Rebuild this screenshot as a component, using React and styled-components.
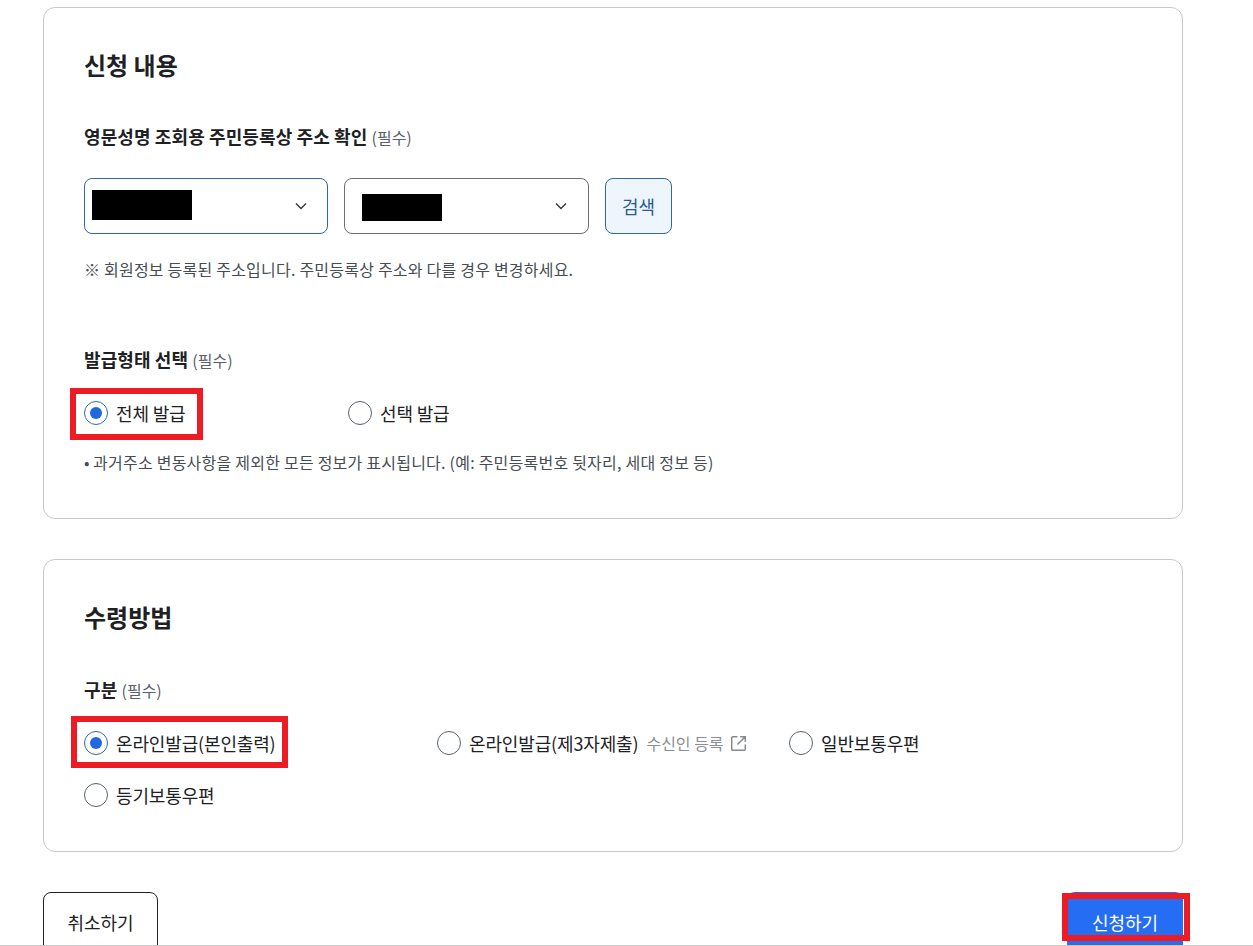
import React from "react";
import styled, { createGlobalStyle } from "styled-components";

const GlobalStyle = createGlobalStyle`
  html, body {
    margin: 0;
    padding: 0;
    background: #fff;
    overflow: hidden;
  }
  body {
    font-family: "Noto Sans CJK KR", "Noto Sans", sans-serif;
    color: #1e2124;
  }
`;

const App = () => {
  return (
    <Page>
      <GlobalStyle />
      <Card $height={512}>
        <CardTitle>신청 내용</CardTitle>
        <FieldLabel $top={41}>
          영문성명 조회용 주민등록상 주소 확인 <Required>(필수)</Required>
        </FieldLabel>
        <SelectRow>
          <Select $active $width={244}>
            <Redacted $width={100} $height={30} $left={-12} $shift={-2} />
            <Chevron />
          </Select>
          <Select $width={245}>
            <Redacted $width={80} $height={27} $left={-2} $shift={3} />
            <Chevron />
          </Select>
          <SearchButton>검색</SearchButton>
        </SelectRow>
        <Note>※ 회원정보 등록된 주소입니다. 주민등록상 주소와 다를 경우 변경하세요.</Note>
        <FieldLabel $top={66}>
          발급형태 선택 <Required>(필수)</Required>
        </FieldLabel>
        <RadioRow $top={29} $gap={161}>
          <Radio $checked $width={103}>
            <Circle $checked />
            <span>전체 발급</span>
            <Highlight $top={-13} $left={-14} $width={133} $height={52} />
          </Radio>
          <Radio>
            <Circle />
            <span>선택 발급</span>
          </Radio>
        </RadioRow>
        <Hint>•&#8201;과거주소 변동사항을 제외한 모든 정보가 표시됩니다. (예: 주민등록번호 뒷자리, 세대 정보 등)</Hint>
      </Card>

      <Card $height={293}>
        <CardTitle>수령방법</CardTitle>
        <FieldLabel $top={42}>
          구분 <Required>(필수)</Required>
        </FieldLabel>
        <RadioRow $top={29} $gap={0}>
          <Radio $checked $width={353}>
            <Circle $checked />
            <span>온라인발급(본인출력)</span>
            <Highlight $top={-15} $left={-13} $width={217} $height={52} />
          </Radio>
          <Radio $width={352}>
            <Circle />
            <span>온라인발급(제3자제출)</span>
            <SubLink>
              수신인 등록
              <ExternalIcon />
            </SubLink>
          </Radio>
          <Radio>
            <Circle />
            <span>일반보통우편</span>
          </Radio>
        </RadioRow>
        <RadioRow $top={28} $gap={0}>
          <Radio>
            <Circle />
            <span>등기보통우편</span>
          </Radio>
        </RadioRow>
      </Card>

      <Actions>
        <CancelButton>취소하기</CancelButton>
        <SubmitButton>
          신청하기
          <Highlight $top={1} $left={-5} $width={128} $height={48} />
        </SubmitButton>
      </Actions>
    </Page>
  );
};

export default App;

const Chevron = () => (
  <ChevronSvg viewBox="0 0 14 14" fill="none">
    <path d="M2 4.5 L7 9.5 L12 4.5" stroke="#33363d" strokeWidth="1.4" />
  </ChevronSvg>
);

const ExternalIcon = () => (
  <LinkSvg viewBox="0 0 16 16" fill="none">
    <path
      d="M7 1.6 H2.6 A1 1 0 0 0 1.6 2.6 V13.4 A1 1 0 0 0 2.6 14.4 H13.4 A1 1 0 0 0 14.4 13.4 V9 M9.6 1.6 H14.4 V6.4 M14.4 1.6 L7 9"
      stroke="#85888c"
      strokeWidth="1.4"
    />
  </LinkSvg>
);

const Page = styled.div`
  box-sizing: border-box;
  position: relative;
  width: 1253px;
  height: 946px;
  padding: 7px 70px 0 43px;
  overflow: hidden;
  border-bottom: 1px solid #c9c9c9;
`;

const Card = styled.section`
  box-sizing: border-box;
  width: 1140px;
  height: ${(p) => p.$height}px;
  margin-bottom: 40px;
  padding: 39px 40px 0;
  border: 1px solid #c6c8cc;
  border-radius: 12px;
  background: #fff;
`;

const CardTitle = styled.h2`
  margin: 0;
  font-size: 24px;
  line-height: 36px;
  font-weight: 700;
  color: #1e2124;
`;

const FieldLabel = styled.div`
  margin-top: ${(p) => p.$top}px;
  font-size: 18px;
  line-height: 24px;
  font-weight: 700;
  letter-spacing: 0.1px;
  color: #1e2124;
`;

const Required = styled.span`
  font-size: 16px;
  font-weight: 400;
  letter-spacing: 0;
  color: #58616a;
`;

const SelectRow = styled.div`
  display: flex;
  gap: 16px;
  margin-top: 29px;
`;

const Select = styled.div`
  box-sizing: border-box;
  display: flex;
  align-items: center;
  justify-content: space-between;
  width: ${(p) => p.$width}px;
  height: 56px;
  padding: 0 ${(p) => (p.$active ? 19 : 20)}px 0 19px;
  border: 1px solid ${(p) => (p.$active ? "#2c6aa0" : "#6b6e72")};
  border-radius: 8px;
  background: #fff;
`;

const Redacted = styled.div`
  width: ${(p) => p.$width}px;
  height: ${(p) => p.$height}px;
  margin-left: ${(p) => p.$left}px;
  margin-top: ${(p) => p.$shift}px;
  background: #000;
`;

const ChevronSvg = styled.svg`
  width: 14px;
  height: 14px;
  flex: none;
`;

const SearchButton = styled.button`
  box-sizing: border-box;
  width: 67px;
  height: 56px;
  padding: 0;
  border: 1px solid #2c6aa0;
  border-radius: 8px;
  background: #eef5fd;
  color: #2a5a96;
  font-family: inherit;
  font-size: 18px;
`;

const Note = styled.p`
  margin: 23px 0 0;
  font-size: 16px;
  line-height: 24px;
  letter-spacing: 0.22px;
  color: #464c53;
`;

const RadioRow = styled.div`
  display: flex;
  align-items: center;
  gap: ${(p) => p.$gap}px;
  margin-top: ${(p) => p.$top}px;
`;

const Radio = styled.label`
  position: relative;
  display: flex;
  align-items: center;
  gap: 8px;
  width: ${(p) => (p.$width ? `${p.$width}px` : "auto")};
  height: 24px;
  font-size: 18px;
  letter-spacing: -0.15px;
  color: #1e2124;
`;

const Circle = styled.span`
  box-sizing: border-box;
  display: flex;
  align-items: center;
  justify-content: center;
  width: 24px;
  height: 24px;
  flex: none;
  border: 1px solid ${(p) => (p.$checked ? "#2c6aa8" : "#58616a")};
  border-radius: 50%;
  background: #fff;

  &::after {
    content: "";
    display: ${(p) => (p.$checked ? "block" : "none")};
    width: 12px;
    height: 12px;
    border-radius: 50%;
    background: #1f68e0;
  }
`;

const Highlight = styled.span`
  box-sizing: border-box;
  position: absolute;
  top: ${(p) => p.$top}px;
  left: ${(p) => p.$left}px;
  width: ${(p) => p.$width}px;
  height: ${(p) => p.$height}px;
  border: 6px solid #ed1c24;
  pointer-events: none;
`;

const SubLink = styled.span`
  display: inline-flex;
  align-items: center;
  gap: 6px;
  font-size: 16px;
  letter-spacing: 0;
  color: #8a8d92;
`;

const LinkSvg = styled.svg`
  width: 17px;
  height: 17px;
`;

const Hint = styled.p`
  margin: 25px 0 0;
  font-size: 16px;
  line-height: 24px;
  letter-spacing: 0.23px;
  color: #464c53;
`;

const Actions = styled.div`
  display: flex;
  justify-content: space-between;
  width: 1140px;
`;

const CancelButton = styled.button`
  box-sizing: border-box;
  width: 115px;
  height: 64px;
  padding: 0 0 4px;
  border: 1px solid #1e2124;
  border-radius: 8px;
  background: #fff;
  color: #1e2124;
  font-family: inherit;
  font-size: 18px;
`;

const SubmitButton = styled.button`
  box-sizing: border-box;
  position: relative;
  width: 116px;
  height: 64px;
  padding: 0 0 4px;
  border: 0;
  border-radius: 8px;
  background: #256ef4;
  color: #fff;
  font-family: inherit;
  font-size: 18px;
`;
